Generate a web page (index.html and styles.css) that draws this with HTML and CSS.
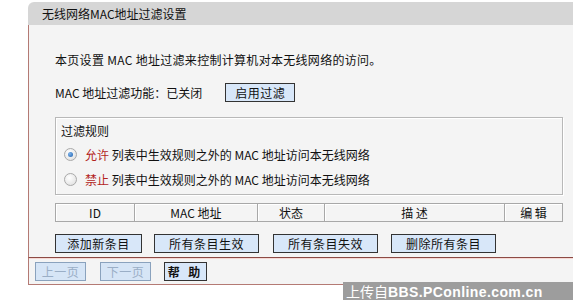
FILE: index.html
```html
<!DOCTYPE html>
<html lang="zh-CN">
<head>
    <meta charset="UTF-8">
    <title>无线网络MAC地址过滤设置</title>
    <link rel="stylesheet" href="styles.css">
</head>
<body>
    <div class="panel">
        <div class="panel-title">无线网络MAC地址过滤设置</div>
        <div class="panel-body">
            <p class="intro">本页设置 MAC 地址过滤来控制计算机对本无线网络的访问。</p>
            <div class="status-row">
                <span>MAC 地址过滤功能：已关闭</span>
                <button class="btn btn-enable">启用过滤</button>
            </div>

            <div class="rules">
                <div class="rules-title">过滤规则</div>
                <div class="rule">
                    <span class="radio checked"></span>
                    <span><span class="red">允许</span> 列表中生效规则之外的 MAC 地址访问本无线网络</span>
                </div>
                <div class="rule">
                    <span class="radio"></span>
                    <span><span class="red">禁止</span> 列表中生效规则之外的 MAC 地址访问本无线网络</span>
                </div>
            </div>

            <table class="list">
                <tr>
                    <th class="c-id">ID</th>
                    <th class="c-mac">MAC 地址</th>
                    <th class="c-state">状态</th>
                    <th class="c-desc">描 述</th>
                    <th class="c-edit">编 辑</th>
                </tr>
            </table>

            <div class="actions">
                <button class="btn w-add">添加新条目</button>
                <button class="btn w-all">所有条目生效</button>
                <button class="btn w-all">所有条目失效</button>
                <button class="btn w-all">删除所有条目</button>
            </div>
        </div>
        <div class="panel-foot">
            <button class="btn btn-off">上一页</button>
            <button class="btn btn-off">下一页</button>
            <button class="btn btn-help">帮 助</button>
        </div>
    </div>

    <div class="watermark">上传自<b>BBS.PConline.com.cn</b></div>
</body>
</html>
```

FILE: styles.css
```css
html, body {
    margin: 0;
    overflow: hidden;
}
body {
    background: #fff;
    font-family: "Noto Sans CJK SC", "DejaVu Sans", sans-serif;
    font-size: 12px;
    color: #111;
    height: 300px;
    position: relative;
}
.panel {
    margin: 2px 0 0 28px;
    width: 545px;
}
.panel-title {
    background: #d6d6d6;
    border-top-left-radius: 6px;
    height: 23px;
    line-height: 23px;
    padding-left: 14px;
}
.panel-body {
    background: #f4f4f4;
    border-left: 1px solid #b47a74;
    padding: 25px 0 4px 26px;
}
.intro {
    margin: 0;
    line-height: 20px;
    letter-spacing: 0.3px;
}
.status-row {
    display: flex;
    align-items: center;
    height: 20px;
    margin-top: 12px;
}
.btn {
    font-family: inherit;
    font-size: 12px;
    color: #111;
    background: #d8e7f9;
    border: 1px solid #333;
    height: 19px;
    padding: 0;
    line-height: 17px;
    letter-spacing: 0.5px;
}
.btn-enable {
    width: 70px;
    margin-left: 23px;
}
.rules {
    margin-top: 15px;
    width: 508px;
    border: 1px solid #b8b8b8;
    box-shadow: inset 1px 1px 0 #fff, 1px 1px 0 #fff;
    padding: 2px 0 1px 5px;
    box-sizing: border-box;
    height: 78px;
}
.rules-title {
    line-height: 22px;
}
.rule {
    display: flex;
    align-items: center;
    height: 25px;
    padding-left: 3px;
}
.radio {
    flex: none;
    width: 11px;
    height: 11px;
    border-radius: 50%;
    border: 1px solid #a9a9a9;
    background: radial-gradient(circle at 40% 35%, #fff 0, #e6e6e6 70%, #cfcfcf 100%);
    margin-right: 8px;
    position: relative;
}
.radio.checked::after {
    content: "";
    position: absolute;
    left: 3px;
    top: 3px;
    width: 5px;
    height: 5px;
    border-radius: 50%;
    background: radial-gradient(circle at 35% 35%, #7fb4ea, #1b5fae);
}
.red {
    color: #b3241c;
}
.list {
    margin-top: 8px;
    width: 508px;
    border-collapse: collapse;
}
.list th {
    font-weight: normal;
    height: 17px;
    padding: 0;
    line-height: 17px;
    border: 1px solid #a8a8a8;
    box-shadow: inset 1px 1px 0 #fff;
    text-align: center;
}
.c-id { width: 78px; }
.c-mac { width: 122px; }
.c-state { width: 66px; }
.c-desc { width: 179px; }
.actions {
    display: flex;
    margin-top: 12px;
    gap: 12px;
}
.w-add { width: 87px; }
.w-all { width: 105px; }
.actions .w-all:nth-child(3) { margin-left: 2px; }
.actions .w-all:nth-child(4) { margin-left: 1px; }
.panel-foot {
    background: #f4f4f4;
    border-top: 1px solid #8c4a44;
    box-shadow: inset 0 1px 0 #f6d8d4;
    border-left: 1px solid #b47a74;
    border-bottom: 1px solid #b47a74;
    height: 26px;
    display: flex;
    align-items: center;
    padding-left: 6px;
    gap: 14px;
}
.btn-off {
    width: 51px;
    color: #9aaec6;
    border-color: #8aa2bd;
    background: #d6e5f6;
}
.btn-help {
    width: 43px;
    font-weight: bold;
    margin-left: -1px;
    letter-spacing: 3px;
}
.watermark {
    position: absolute;
    right: 0;
    bottom: 0;
    width: 230px;
    height: 18px;
    line-height: 18px;
    background: #9d9d9d;
    color: #fff;
    font-size: 14px;
    padding-left: 3px;
    box-sizing: border-box;
    white-space: nowrap;
}
.watermark b {
    font-family: "Liberation Sans", Arial, sans-serif;
    font-size: 14px;
    letter-spacing: 0.4px;
}
```
